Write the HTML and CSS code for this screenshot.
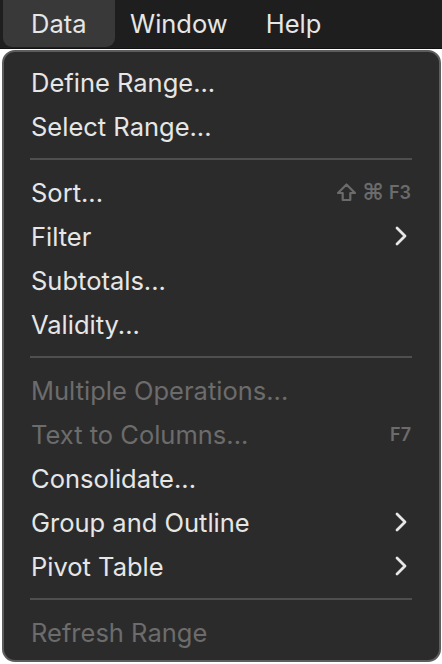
FILE: index.html
```html
<!DOCTYPE html>
<html lang="en">
<head>
    <meta charset="UTF-8">
    <title>Data Menu</title>
    <link rel="stylesheet" href="styles.css">
</head>
<body>
    <div class="menubar">
        <div class="bar-item active">Data</div>
        <div class="bar-item window">Window</div>
        <div class="bar-item help">Help</div>
    </div>

    <div class="menu">
        <div class="item">Define Range...</div>
        <div class="item">Select Range...</div>
        <div class="separator"></div>
        <div class="item">
            <span>Sort...</span>
            <span class="shortcut">
                <svg class="shift" width="21" height="19" viewBox="0 0 21 19">
                    <path d="M10.5 1.5 L19 10 H14.3 V17 H6.7 V10 H2 Z" fill="none" stroke="#6b6b6b" stroke-width="2.2" stroke-linejoin="round"/>
                </svg>
                <span class="cmd">⌘</span>F3
            </span>
        </div>
        <div class="item">
            <span>Filter</span>
            <svg class="chevron" width="14" height="20" viewBox="0 0 14 20"><path d="M3 2 L11 10 L3 18" fill="none" stroke="#e6e6e6" stroke-width="2.8" stroke-linecap="round" stroke-linejoin="round"/></svg>
        </div>
        <div class="item">Subtotals...</div>
        <div class="item">Validity...</div>
        <div class="separator"></div>
        <div class="item disabled">Multiple Operations...</div>
        <div class="item disabled">
            <span>Text to Columns...</span>
            <span class="shortcut">F7</span>
        </div>
        <div class="item">Consolidate...</div>
        <div class="item">
            <span>Group and Outline</span>
            <svg class="chevron" width="14" height="20" viewBox="0 0 14 20"><path d="M3 2 L11 10 L3 18" fill="none" stroke="#e6e6e6" stroke-width="2.8" stroke-linecap="round" stroke-linejoin="round"/></svg>
        </div>
        <div class="item">
            <span>Pivot Table</span>
            <svg class="chevron" width="14" height="20" viewBox="0 0 14 20"><path d="M3 2 L11 10 L3 18" fill="none" stroke="#e6e6e6" stroke-width="2.8" stroke-linecap="round" stroke-linejoin="round"/></svg>
        </div>
        <div class="separator"></div>
        <div class="item disabled">Refresh Range</div>
    </div>
</body>
</html>
```

FILE: styles.css
```css
body {
    margin: 0;
    background-color: #fff;
    font-family: Inter, "Noto Sans", sans-serif;
    color: #e6e6e6;
    height: 664px;
    overflow: hidden;
}

.menubar {
    display: flex;
    height: 48px;
    background-color: #1e1e1e;
    border-bottom: 1px solid #111;
    font-size: 25.5px;
}

.bar-item {
    display: flex;
    align-items: center;
    height: 46px;
    padding-bottom: 1px;
}

.bar-item.active {
    margin-left: 3px;
    width: 112px;
    padding-left: 28px;
    box-sizing: content-box;
    box-sizing: border-box;
    height: 47px;
    background-color: #393939;
    border-radius: 0 0 9px 9px;
}

.bar-item.window {
    margin-left: 15px;
}

.bar-item.help {
    margin-left: 38px;
}

.menu {
    margin: 1px 1px 0 2px;
    height: 612px;
    box-sizing: border-box;
    padding: 8px 0 6px;
    background-color: #2b2b2b;
    border: 2px solid #5d5d5d;
    border-radius: 13px;
    font-size: 25.5px;
}

.item {
    display: flex;
    align-items: center;
    justify-content: space-between;
    height: 44px;
    padding: 0 28px 0 27px;
}

.item.disabled {
    color: #6c6c6c;
}

.shortcut {
    display: flex;
    align-items: center;
    color: #6b6b6b;
    font-size: 18px;
    font-weight: 600;
}

.shift {
    margin-right: 6px;
}

.cmd {
    font-family: "DejaVu Sans", sans-serif;
    font-size: 23px;
    font-weight: 700;
    margin-right: 5px;
}

.chevron {
    margin-right: 3px;
}

.separator {
    height: 2px;
    margin: 10px 27px 10px 26px;
    background-color: #4f4f4f;
}
```
